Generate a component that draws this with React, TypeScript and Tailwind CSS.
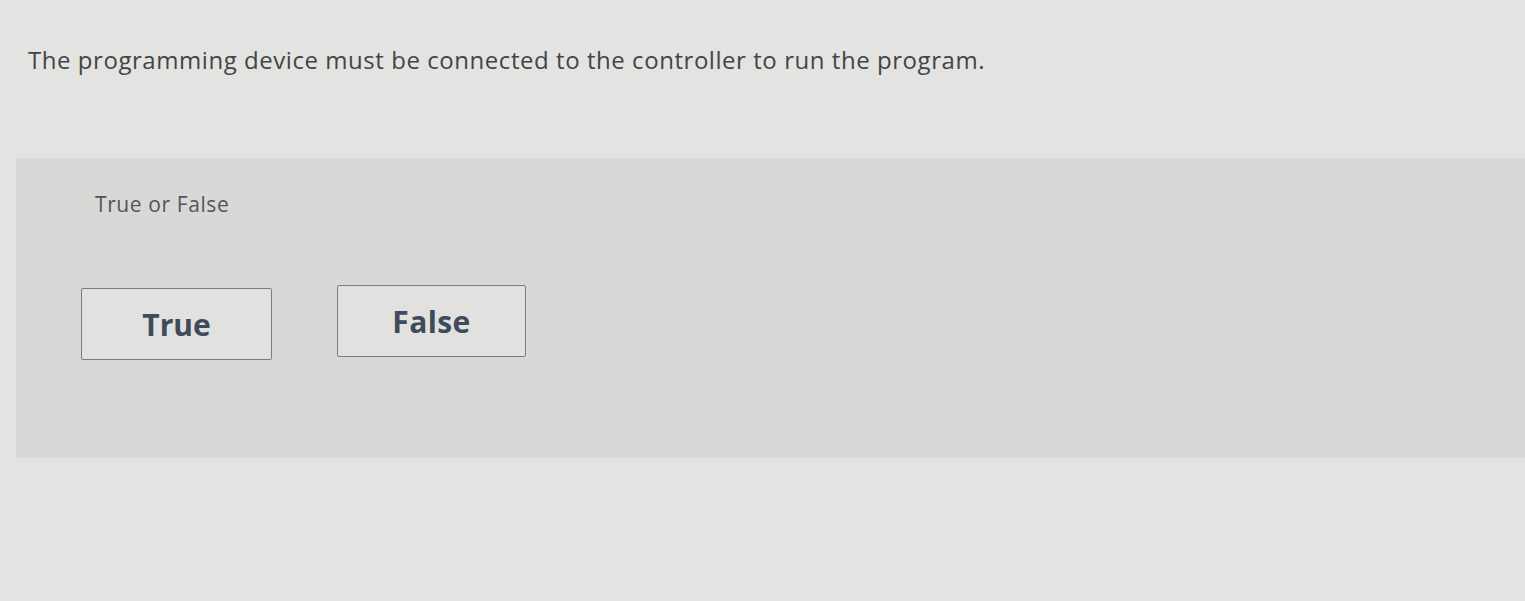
export default function App() {
  return (
    <div className="min-h-[601px] w-full bg-[#e3e4e2] font-['Open_Sans',sans-serif]">
      <div className="px-7 pt-[44px]">
        <h1 className="text-[24px] leading-8 tracking-[0.55px] text-[#434545]">
          The programming device must be connected to the controller to run the program.
        </h1>
      </div>

      <section className="ml-4 mt-[82px] h-[300px] bg-[#d8d9d7] pl-[65px] pt-[30px]">
        <p className="ml-[14px] text-[21px] leading-8 tracking-[0.6px] text-[#535555]">True or False</p>

        <div className="mt-[68px] flex items-start gap-[65px]">
          <button className="flex h-[72px] w-[191px] items-center justify-center rounded-[2px] border-[1.5px] border-[#7b7d7e] bg-[#e1e2e0] text-[30px] font-bold text-[#3f4a5a]">
            True
          </button>
          <button className="-mt-[3px] flex h-[72px] w-[189px] items-center justify-center rounded-[2px] border-[1.5px] border-[#7b7d7e] bg-[#e1e2e0] text-[30px] font-bold tracking-[0.4px] text-[#3f4a5a]">
            False
          </button>
        </div>
      </section>
    </div>
  );
}
